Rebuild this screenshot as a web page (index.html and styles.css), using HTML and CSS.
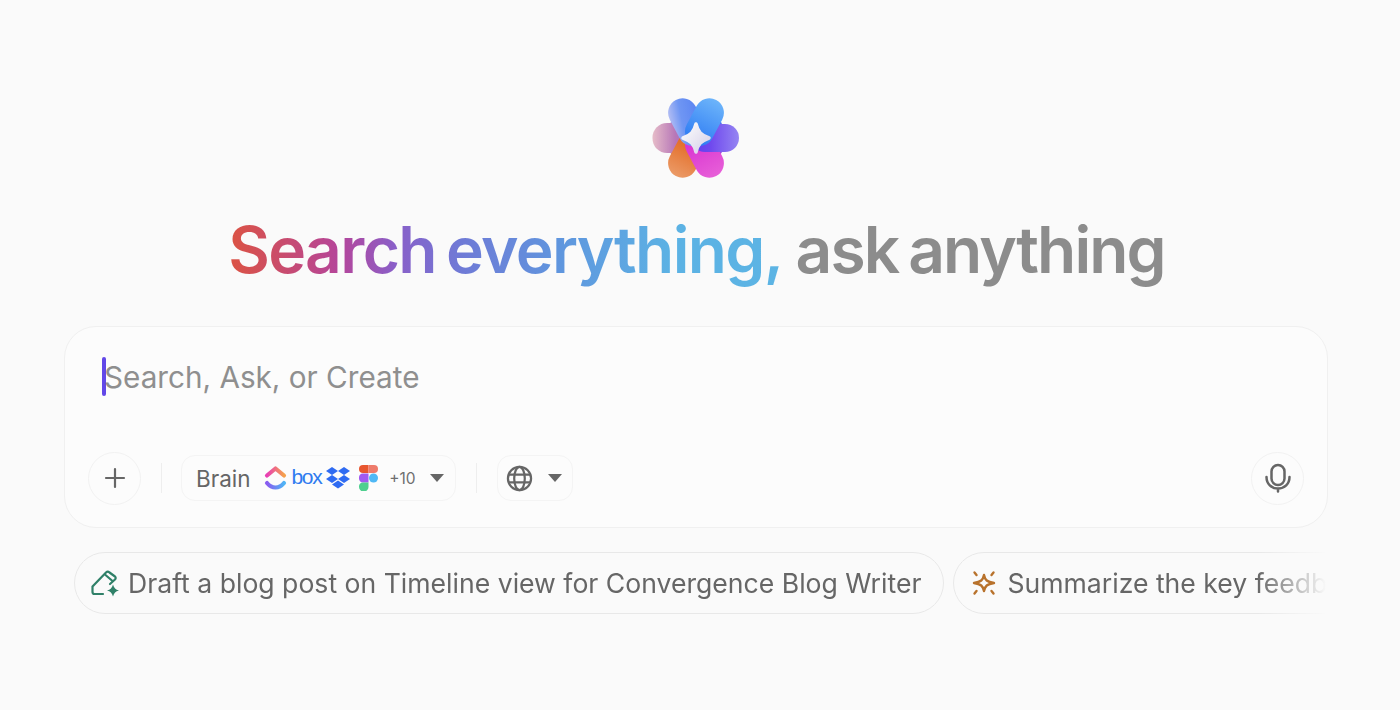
FILE: index.html
```html
<!DOCTYPE html>
<html lang="en">
<head>
  <meta charset="UTF-8">
  <title>Search everything, ask anything</title>
  <link rel="stylesheet" href="styles.css">
</head>
<body>

  <div class="container">
    <div class="logo">
      <svg width="90" height="84" viewBox="0 0 90 84">
        <defs>
          <linearGradient id="petal-tl" x1="0" y1="0" x2="1" y2="0.5">
            <stop offset="0" stop-color="#c5c8f3"/>
            <stop offset="0.45" stop-color="#6f96f3"/>
            <stop offset="1" stop-color="#5a84f2"/>
          </linearGradient>
          <linearGradient id="petal-tr" x1="0" y1="0" x2="0" y2="1">
            <stop offset="0" stop-color="#6cb4fa"/>
            <stop offset="1" stop-color="#2b78f3"/>
          </linearGradient>
          <linearGradient id="petal-r" x1="0" y1="0" x2="0" y2="1">
            <stop offset="0" stop-color="#9585f2"/>
            <stop offset="0.6" stop-color="#6f48ee"/>
            <stop offset="1" stop-color="#5b3df0"/>
          </linearGradient>
          <linearGradient id="petal-br" x1="0" y1="0" x2="0" y2="1">
            <stop offset="0" stop-color="#e75fd8"/>
            <stop offset="1" stop-color="#d62bd0"/>
          </linearGradient>
          <linearGradient id="petal-bl" x1="0" y1="0" x2="0" y2="1">
            <stop offset="0" stop-color="#eb9a66"/>
            <stop offset="0.6" stop-color="#e4722f"/>
            <stop offset="1" stop-color="#d9602a"/>
          </linearGradient>
          <linearGradient id="petal-l" x1="0" y1="0" x2="0" y2="1">
            <stop offset="0" stop-color="#e6bcc8"/>
            <stop offset="0.45" stop-color="#b878b8"/>
            <stop offset="1" stop-color="#9a55c0"/>
          </linearGradient>
          <linearGradient id="star" x1="0" y1="0" x2="1" y2="1">
            <stop offset="0" stop-color="#fdfdfd"/>
            <stop offset="1" stop-color="#d5d0e8"/>
          </linearGradient>
        </defs>
        <g transform="translate(45 42)">
          <circle cx="0" cy="-17" r="12" fill="#5a8cf2"/>
          <circle cx="15" cy="-9" r="12" fill="#4a6af0"/>
          <circle cx="15" cy="9" r="12" fill="#9a45e0"/>
          <circle cx="0" cy="17" r="12" fill="#e0553f"/>
          <circle cx="-15" cy="9" r="12" fill="#cf7d88"/>
          <circle cx="-15" cy="-9" r="12" fill="#a78bd8"/>
          <rect x="-15" y="-43.500" width="30" height="50" rx="14.500" transform="rotate(270)" fill="url(#petal-l)"/>
          <rect x="-14.500" y="-43" width="29" height="50" rx="14.500" transform="rotate(208)" fill="url(#petal-bl)"/>
          <rect x="-14.500" y="-43" width="29" height="50" rx="14.500" transform="rotate(152)" fill="url(#petal-br)"/>
          <rect x="-14.500" y="-43" width="29" height="50" rx="14.500" transform="rotate(-28)" fill="url(#petal-tl)"/>
          <rect x="-14" y="-43" width="28" height="48" rx="14" transform="rotate(90)" fill="url(#petal-r)"/>
          <rect x="-14.500" y="-43" width="29" height="50" rx="14.500" transform="rotate(28)" fill="url(#petal-tr)"/>
          <path d="M0-14c2 8 5 11 13 14-8 3-11 6-13 14-2-8-5-11-13-14 8-3 11-6 13-14z" stroke="url(#star)" stroke-width="3.500" stroke-linejoin="round" fill="url(#star)"/>
        </g>
      </svg>
    </div>

    <h1 class="title"><span class="gradient">Search everything,</span> <span class="plain">ask anything</span></h1>

    <div class="search-box">
      <div class="prompt">
        <span class="caret"></span>
        <span>Search, Ask, or Create</span>
      </div>

      <div class="toolbar">
        <button class="round-btn" type="button">
          <svg width="24" height="24" viewBox="0 0 24 24" fill="none" stroke="#666" stroke-width="2.200" stroke-linecap="round">
            <path d="M12 3v18M3 12h18"/>
          </svg>
        </button>
        <span class="divider"></span>

        <div class="pill brain">
          <span class="brain-label">Brain</span>
          <svg class="app-icon" width="23" height="26" viewBox="0 0 23 26" fill="none" stroke-width="4.200" stroke-linecap="round" stroke-linejoin="round">
            <defs>
              <linearGradient id="cu-top" x1="0" y1="0" x2="1" y2="0">
                <stop offset="0" stop-color="#e83fb5"/>
                <stop offset="1" stop-color="#f5a24c"/>
              </linearGradient>
              <linearGradient id="cu-bottom" x1="0" y1="0" x2="1" y2="0">
                <stop offset="0" stop-color="#8a5cf0"/>
                <stop offset="1" stop-color="#4fb4f5"/>
              </linearGradient>
            </defs>
            <path d="M3 10.500 11.500 3.500 20 10.500" stroke="url(#cu-top)"/>
            <path d="M3 18c5 6 12 6 17 0" stroke="url(#cu-bottom)"/>
          </svg>
          <span class="box-logo">box</span>
          <svg class="app-icon" width="26" height="23" viewBox="0 0 26 23" fill="#2f6bf2">
            <path d="M7 0 13 4 7 8 1 4zM19 0 25 4 19 8 13 4zM7 8 13 12 7 16 1 12zM19 8 25 12 19 16 13 12zM7 17.500 13 13.500 19 17.500 13 21.500z"/>
          </svg>
          <svg class="app-icon figma" width="19" height="26" viewBox="0 0 19 26">
            <path d="M0 4a4 4 0 0 1 4-4h5.500v8H4a4 4 0 0 1-4-4z" fill="#e8562f"/>
            <path d="M9.500 0H15a4 4 0 0 1 0 8H9.500z" fill="#ee7b6b"/>
            <path d="M0 13a4 4 0 0 1 4-4.500h5.500v9H4A4 4 0 0 1 0 13z" fill="#a259f0"/>
            <circle cx="14.500" cy="13" r="4.500" fill="#4fb8f5"/>
            <path d="M0 22a4 4 0 0 1 4-4.500h5.500V22a4 4 0 0 1-9.500 0z" fill="#4fcf8f"/>
          </svg>
          <span class="count">+10</span>
          <span class="arrow"></span>
        </div>
        <span class="divider"></span>

        <div class="pill globe">
          <svg width="27" height="27" viewBox="0 0 28 28" fill="none" stroke="#666" stroke-width="2.300">
            <circle cx="14" cy="14" r="12"/>
            <ellipse cx="14" cy="14" rx="5.500" ry="12"/>
            <path d="M3 10h22M3 18h22"/>
          </svg>
          <span class="arrow"></span>
        </div>

        <button class="round-btn mic" type="button">
          <svg width="28" height="30" viewBox="0 0 28 30" fill="none" stroke="#666" stroke-width="2.500" stroke-linecap="round">
            <rect x="7.500" y="2" width="13" height="20" rx="6.500"/>
            <path d="M2.500 14c0 7 5 11.500 11.500 11.500S25.500 21 25.500 14M14 25.500v3"/>
          </svg>
        </button>
      </div>
    </div>

    <div class="suggestions">
      <div class="chip">
        <svg width="30" height="28" viewBox="0 0 30 28" fill="none" stroke="#2f8068" stroke-width="2.200" stroke-linejoin="round" stroke-linecap="round">
          <path d="M12 25H3.500a2 2 0 0 1-2-2V17.500L15 3.500a2.500 2.500 0 0 1 3.500 0l5.500 4a2 2 0 0 1 0 3L19 15"/>
          <path d="M14.500 6l7 6"/>
          <path d="M22 15.500c1 3.500 2.500 5 6 6-3.500 1-5 2.500-6 6-1-3.500-2.500-5-6-6 3.500-1 5-2.500 6-6z" fill="#2f8068" stroke="none"/>
        </svg>
        <span>Draft a blog post on Timeline view for Convergence Blog Writer</span>
      </div>
      <div class="chip chip-cut">
        <svg class="spark" width="26" height="26" viewBox="0 0 26 26" fill="none" stroke="#b8722c" stroke-width="2.400" stroke-linecap="round" stroke-linejoin="round">
          <path d="M13 5c1 5 3 7 10 8-7 1-9 3-10 8-1-5-3-7-10-8 7-1 9-3 10-8z"/>
          <path d="M3.500 2.500l2 2.500M22.500 2.500l-2 2.500M3.500 23.500l2-2.500M22.500 23.500l-2-2.500"/>
        </svg>
        <span>Summarize the key feedb</span>
      </div>
    </div>
  </div>

</body>
</html>
```

FILE: styles.css
```css
body {
  font-family: Inter, "Liberation Sans", sans-serif;
  background-color: #fafafa;
  margin: 0;
  height: 710px;
  overflow: hidden;
}

.container {
  width: 1264px;
  margin-left: 64px;
  padding-top: 96px;
}

.logo {
  display: flex;
  justify-content: center;
  height: 84px;
}

.logo svg {
  filter: blur(0.5px);
}

.title {
  margin: 30px 0 0;
  padding-left: 1px;
  text-align: center;
  font-size: 64px;
  line-height: 80px;
  font-weight: 600;
  letter-spacing: -1.6px;
  word-spacing: -4.5px;
  color: #8c8c8c;
  white-space: nowrap;
}

.gradient {
  margin-right: 3px;
  background: linear-gradient(90deg, #dc5342 0%, #b5459a 20%, #8a5fc8 30%, #6f7ad6 42%, #5f96de 60%, #5cb2e4 80%, #5cb4e4 100%);
  -webkit-background-clip: text;
  background-clip: text;
  color: transparent;
}

.plain {
  letter-spacing: -1.85px;
}

.search-box {
  margin-top: 36px;
  height: 200px;
  background: #fcfcfc;
  border: 1px solid #f0f0f0;
  border-radius: 32px;
  padding: 0.1px 23px 0;
}

.prompt {
  display: flex;
  align-items: center;
  height: 39px;
  margin: 30px 0 0 14px;
  font-size: 29.7px;
  color: #8f8f8f;
}

.caret {
  width: 4px;
  height: 39px;
  background: #6248e8;
  border-radius: 2px;
  margin-right: -2px;
}

.toolbar {
  display: flex;
  align-items: center;
  margin-top: 56px;
  height: 52px;
}

.round-btn {
  display: flex;
  align-items: center;
  justify-content: center;
  width: 53px;
  height: 53px;
  padding: 0;
  background: none;
  border: 1px solid #f2f2f2;
  border-radius: 50%;
}

.mic {
  margin-left: auto;
}

.divider {
  width: 1px;
  height: 30px;
  background: #eeeeee;
  margin: 0 20px;
}

.pill {
  display: flex;
  align-items: center;
  height: 44px;
  border: 1px solid #f4f4f4;
  border-radius: 14px;
}

.brain {
  margin-left: -1px;
  padding: 0 11px 0 14px;
}

.brain-label {
  font-size: 22.500px;
  color: #666;
  margin-right: 13px;
}

.box-logo {
  font-family: "Liberation Sans", sans-serif;
  font-size: 21px;
  letter-spacing: -1.4px;
  color: #2f7bf0;
  margin: -3px 4px 0 5px;
}

.figma {
  margin-left: 8px;
}

.count {
  font-size: 15.500px;
  color: #6f6f6f;
  margin-left: 11px;
}

.arrow {
  width: 0;
  height: 0;
  border-left: 7px solid transparent;
  border-right: 7px solid transparent;
  border-top: 8px solid #666;
  margin-left: 14px;
}

.globe {
  padding: 0 10px 0 8px;
}

.globe .arrow {
  margin-left: 15px;
}

.suggestions {
  display: flex;
  gap: 9px;
  width: 1252px;
  margin: 24px 0 0 10px;
  overflow: hidden;
  -webkit-mask-image: linear-gradient(90deg, #000 94.5%, transparent 100%);
  mask-image: linear-gradient(90deg, #000 94.5%, transparent 100%);
}

.chip {
  display: flex;
  align-items: center;
  flex-shrink: 0;
  gap: 7px;
  height: 60px;
  padding: 0 22px 0 16px;
  border: 1px solid #e8e8e8;
  border-radius: 31px;
  font-size: 26.600px;
  color: #666;
  white-space: nowrap;
}

.chip-cut {
  padding-right: 60px;
}

.spark {
  margin: 0 3px 0 1px;
}
```
